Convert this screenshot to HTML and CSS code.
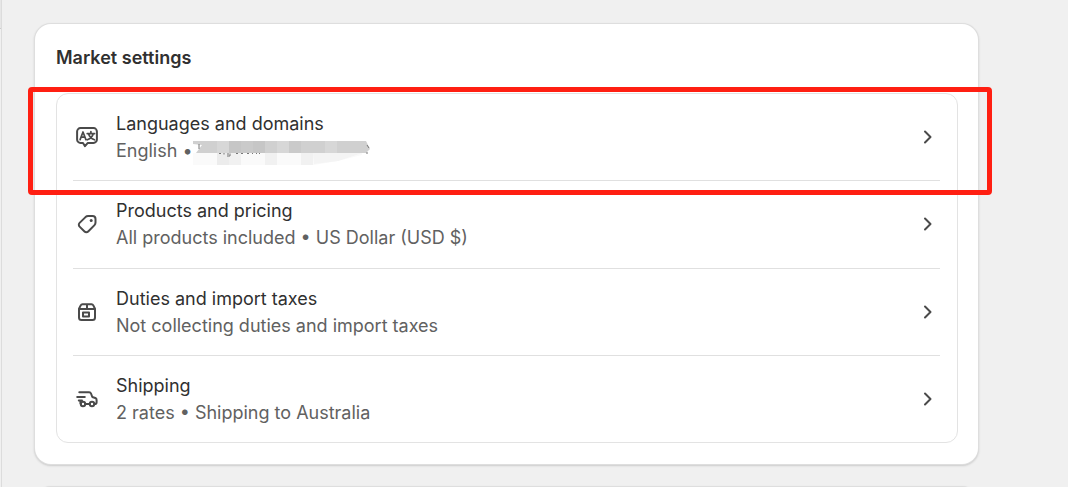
FILE: index.html
```html
<!DOCTYPE html>
<html lang="en">
<head>
<meta charset="utf-8">
<meta name="viewport" content="width=device-width, initial-scale=1">
<title>Market settings</title>
<link rel="stylesheet" href="styles.css">
</head>
<body>
<div class="page">
  <div class="rail"><div class="rail-top"></div></div>
  <main class="content">
    <section class="card">
      <h2 class="card-title">Market settings</h2>
      <ul class="settings">
        <li class="item">
          <a class="row" href="#languages">
            <svg class="icon" viewBox="0 0 24 24" aria-hidden="true">
              <path d="M5.500 3.100h13a3.400 3.400 0 0 1 3.400 3.400v8a3.400 3.400 0 0 1-3.400 3.400h-5.700L10 21.200l-2-3.300H5.500a3.400 3.400 0 0 1-3.400-3.400v-8a3.400 3.400 0 0 1 3.400-3.400Z"/>
              <path class="thin" d="M5.100 14.600 8 7l2.900 7.600M6.100 12.200h3.800M12.200 8.600h7.400M15.900 6.500v2M13.600 8.800c.6 2.600 2.700 4.900 5.900 6M18.200 8.800c-.6 2.600-2.700 4.900-5.900 6"/>
            </svg>
            <span class="text">
              <span class="name">Languages and domains</span>
              <span class="detail">English •
                <svg class="redacted" viewBox="0 0 182 28" role="img" aria-label="Hidden domain">
                  <path fill="#fafafa" d="M0 16h169v2l-24 6-24 4H0z"/>
                  <path fill="#ececec" d="M24 16h12v12H24z"/>
                  <path fill="#f1f1f1" d="M36 16h12v12H36zM72 16h12v12H72zM108 16h12v12h-12z"/>
                  <path fill="#f4f4f4" d="M120 16h49l-24 8-24 3z"/>
                  <path fill="#d0d0d0" d="M0 4h173l4 8-4 4H3l6-8-9-1z"/>
                  <path fill="#c6c6c6" d="M36 4h12v12H36zM60 4h12v12H60z"/>
                  <path fill="#cacaca" d="M48 4h12v12H48zM96 4h12v12H96z"/>
                  <path fill="#d7d7d7" d="M24 4h12v12H24zM84 4h12v12H84zM132 4h12v12h-12z"/>
                  <path class="trace" d="M6 7v5M26 16.500h2M31 16v1.500M34 17h2M37 16.500v2.500h-3M43 16.500h2M48 16.500h2M54 16.500h2M59 16.500h1M63 16.500h1M66 16.500h1M174 8l2 3M174 15v2"/>
                </svg>
              </span>
            </span>
            <svg class="chevron" viewBox="0 0 24 24" aria-hidden="true"><path d="m9 6.500 5.500 5.500L9 17.500"/></svg>
          </a>
          <span class="highlight"></span>
        </li>
        <li class="item">
          <a class="row" href="#products">
            <svg class="icon" viewBox="0 0 24 24" aria-hidden="true">
              <path d="M13.200 4.100h4.300a3 3 0 0 1 3 3v3.500a3.500 3.500 0 0 1-1 2.500l-6.300 6.400a2.600 2.600 0 0 1-3.700 0l-4.900-4.900a2.600 2.600 0 0 1 0-3.700l5.900-5.800a4 4 0 0 1 2.700-1Z"/>
              <circle class="solid" cx="16.200" cy="8.500" r="1.500"/>
            </svg>
            <span class="text">
              <span class="name">Products and pricing</span>
              <span class="detail">All products included • US Dollar (USD $)</span>
            </span>
            <svg class="chevron" viewBox="0 0 24 24" aria-hidden="true"><path d="m9 6.500 5.500 5.500L9 17.500"/></svg>
          </a>
        </li>
        <li class="item">
          <a class="row" href="#duties">
            <svg class="icon" viewBox="0 0 24 24" aria-hidden="true">
              <path d="M4 8.800 5.700 5.400A2 2 0 0 1 7.500 4.300h9A2 2 0 0 1 18.300 5.400L20 8.800v8.700a2.500 2.500 0 0 1-2.500 2.500h-11A2.500 2.500 0 0 1 4 17.500ZM4 9h16M12 4.300V9M8 12.500h6v4H8z"/>
            </svg>
            <span class="text">
              <span class="name">Duties and import taxes</span>
              <span class="detail">Not collecting duties and import taxes</span>
            </span>
            <svg class="chevron" viewBox="0 0 24 24" aria-hidden="true"><path d="m9 6.500 5.500 5.500L9 17.500"/></svg>
          </a>
        </li>
        <li class="item">
          <a class="row" href="#shipping">
            <svg class="icon" viewBox="0 0 24 24" aria-hidden="true">
              <path d="M4.300 5.200h9.800a2 2 0 0 1 1.900 1.300l1.300 3.500 3 1a2 2 0 0 1 1.300 1.900v2.300a1.800 1.800 0 0 1-1.800 1.800M2.200 10h7.600M3.800 13.600H7M5.400 14v1.300a1.800 1.800 0 0 0 .5 1.700M10.200 17h4.200"/>
              <circle cx="8" cy="17" r="2.200"/><circle cx="17" cy="17" r="2.200"/>
            </svg>
            <span class="text">
              <span class="name">Shipping</span>
              <span class="detail">2 rates • Shipping to Australia</span>
            </span>
            <svg class="chevron" viewBox="0 0 24 24" aria-hidden="true"><path d="m9 6.500 5.500 5.500L9 17.500"/></svg>
          </a>
        </li>
      </ul>
    </section>
    <section class="card card-next"></section>
  </main>
</div>
</body>
</html>
```
FILE: styles.css
```css
* { box-sizing: border-box; }

body {
  margin: 0;
  background: #f0f0f0;
  color: #303030;
  font-family: Inter, "Liberation Sans", sans-serif;
  font-size: 18px;
  line-height: 27px;
}

.page {
  display: flex;
  height: 100vh;
  overflow: hidden;
}

.rail {
  flex: none;
  width: 2px;
  border-right: 1px solid #dcdcdc;
}

.rail-top {
  height: 29px;
  background: #e6e6e6;
  border-bottom: 1px solid #cccccc;
}

.content {
  flex: 1;
  display: flex;
  flex-direction: column;
  gap: 23px;
  padding: 24px 90px 0 33px;
}

.card {
  flex: none;
  padding: 20px 20px 21px 21px;
  background: #fff;
  border-radius: 16px;
  box-shadow: 0 0 0 1px #dedede, 0 1px 2px 1px #cccccc;
}

.card-next { height: 120px; }

.card-title {
  margin: 0 0 22px;
  font-size: 18px;
  font-weight: 600;
  line-height: 27px;
}

.settings {
  display: flex;
  flex-direction: column;
  min-height: 350px;
  margin: 0;
  padding: 0 17px 0 16px;
  list-style: none;
  border: 1px solid #e3e3e3;
  border-radius: 12px;
}

.item {
  position: relative;
  flex: 1 0 auto;
  border-bottom: 1px solid #e0e0e0;
}

.item:last-child { border-bottom: 0; }

.row {
  display: flex;
  align-items: center;
  padding: 16px 0;
  color: inherit;
  text-decoration: none;
}

.icon,
.chevron {
  flex: none;
  width: 24px;
  height: 24px;
  fill: none;
  stroke: #4a4a4a;
  stroke-width: 2;
  stroke-linecap: round;
  stroke-linejoin: round;
}

.icon { margin: 0 17px 0 2px; }

.icon .thin { stroke-width: 1.7; }

.icon .solid {
  fill: #4a4a4a;
  stroke: none;
}

.text {
  flex: 1;
  display: flex;
  flex-direction: column;
  min-width: 0;
}

.detail {
  display: flex;
  color: #616161;
}

.redacted {
  width: 182px;
  height: 28px;
  margin-bottom: -1px;
}

.redacted .trace {
  fill: none;
  stroke: #777;
  stroke-width: 1;
}

.highlight {
  position: absolute;
  inset: -7px -52px -15px -45px;
  border: 5px solid #ff1f12;
  border-radius: 4px;
  pointer-events: none;
}
```
